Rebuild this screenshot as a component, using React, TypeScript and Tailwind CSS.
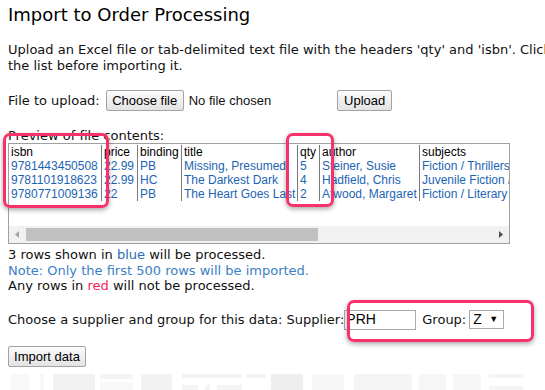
const ROWS = [
  ["9781443450508", "22.99", "PB", "Missing, Presumed", "5", "Steiner, Susie", "Fiction / Thrillers / Suspense"],
  ["9781101918623", "22.99", "HC", "The Darkest Dark", "4", "Hadfield, Chris", "Juvenile Fiction / Biography"],
  ["9780771009136", "22", "PB", "The Heart Goes Last", "2", "Atwood, Margaret", "Fiction / Literary"],
];

const HEADERS = ["isbn", "price", "binding", "title", "qty", "author", "subjects"];

const COLS = "grid grid-cols-[92px_36px_44px_116px_22px_100px_130px]";

function OldButton({ label, className }: { label: string; className?: string }) {
  return (
    <button
      className={`h-[21px] whitespace-nowrap rounded-[2px] border border-[#a3a3a3] bg-gradient-to-b from-[#fbfbfb] to-[#e3e3e3] px-0 font-['Liberation_Sans'] text-[13px] leading-none text-black ${className ?? ""}`}
    >
      {label}
    </button>
  );
}

function Marker({ className }: { className: string }) {
  return (
    <div
      className={`pointer-events-none absolute rounded-[7px] border-[3px] border-[#f5336a] shadow-[0_2px_5px_rgba(0,0,0,0.35)] ${className}`}
    />
  );
}

export default function App() {
  return (
    <div className="relative h-[390px] w-[545px] overflow-hidden bg-white font-['DejaVu_Sans',sans-serif] text-[#111]">
      <div className="w-[800px] px-[8px] pt-[3px]">
        <h1 className="text-[18px] leading-[24px] text-black">Import to Order Processing</h1>

        <p className="mt-[15px] whitespace-nowrap text-[13px] leading-[16px]">
          Upload an Excel file or tab-delimited text file with the headers 'qty' and 'isbn'. Click Preview to check
          <br />
          the list before importing it.
        </p>

        <div className="mt-[16px] flex h-[21px] items-center text-[13px]">
          <span>File to upload:</span>
          <OldButton label="Choose file" className="ml-[6px] w-[78px]" />
          <span className="ml-[5px] font-['Liberation_Sans'] text-[13px]">No file chosen</span>
          <OldButton label="Upload" className="ml-[66px] w-[55px]" />
        </div>

        <p className="mt-[17px] text-[13px] leading-[15px]">Preview of file contents:</p>

        <div className="relative h-[101px] w-[502px] overflow-hidden border border-[#a0a0a0] font-['Liberation_Sans'] text-[12px] leading-[14px]">
          <div className={`${COLS} pt-[1px]`}>
            {HEADERS.map((h, i) => (
              <div key={h} className={`h-[14px] overflow-hidden whitespace-nowrap pl-[2px] text-black ${i > 0 ? "border-l border-[#7a7a7a]" : ""}`}>
                {h}
              </div>
            ))}
            {ROWS.map((row) =>
              row.map((cell, i) => (
                <div
                  key={row[0] + i}
                  className={`h-[14px] overflow-hidden whitespace-nowrap pl-[2px] text-[#1c64b4] ${i > 0 ? "border-l border-[#7a7a7a]" : ""}`}
                >
                  {cell}
                </div>
              ))
            )}
          </div>

          {/* fake horizontal scrollbar */}
          <div className="absolute bottom-0 left-0 right-0 flex h-[17px] items-center bg-[#f1f1f1]">
            <svg width="17" height="17" viewBox="0 0 17 17" className="shrink-0">
              <path d="M10 5 L6 8.5 L10 12 Z" fill="#a3a3a3" />
            </svg>
            <div className="h-[13px] w-[292px] bg-[#c1c1c1]" />
            <div className="flex-1" />
            <svg width="17" height="17" viewBox="0 0 17 17" className="shrink-0">
              <path d="M7 5 L11 8.5 L7 12 Z" fill="#505050" />
            </svg>
          </div>
        </div>

        <div className="mt-[3px] text-[13px] leading-[15.5px]">
          <p>
            3 rows shown in <span className="text-[#2a6cb4]">blue</span> will be processed.
          </p>
          <p className="text-[#3a80c4]">Note: Only the first 500 rows will be imported.</p>
          <p>
            Any rows in <span className="text-[#f0245a]">red</span> will not be processed.
          </p>
        </div>

        <div className="mt-[16px] flex h-[20px] items-center text-[13px]">
          <span>Choose a supplier and group for this data: Supplier:</span>
          <input
            readOnly
            value="PRH"
            className="ml-[0px] h-[20px] w-[72px] border border-[#a9a9a9] px-[1px] font-['Liberation_Sans'] text-[14px] text-black outline-none"
          />
          <span className="ml-[6px]">Group:</span>
          <div className="ml-[3px] flex h-[19px] w-[35px] items-center justify-between border border-[#a9a9a9] pl-[3px] pr-[5px] font-['Liberation_Sans'] text-[14px] text-black">
            <span>Z</span>
            <span className="text-[9px]">▼</span>
          </div>
        </div>

        <OldButton label="Import data" className="mt-[16px] h-[20px] w-[78px]" />

        <div className="mt-[6px] flex h-[18px] items-start">
          <div className="ml-[2px] h-[18px] w-[20px] bg-[#f8f8f8]" />
          <div className="ml-[10px] h-[18px] w-[4px] bg-[#f8f8f8]" />
          <div className="ml-[9px] h-[18px] w-[42px] bg-[#f1f1f1]" />
          <div className="ml-[5px] flex h-[18px] w-[33px] flex-col gap-[3px]">
            <div className="h-[5px] bg-[#f4f4f4]" />
            <div className="h-[10px] bg-[#f8f8f8]" />
          </div>
          <div className="ml-[8px] h-[18px] w-[31px] bg-[#f2f2f2]" />
          <div className="ml-[10px] flex h-[18px] w-[60px] flex-col justify-between">
            <div className="h-[4px] bg-[#f4f4f4]" />
            <div className="flex gap-[7px]">
              <div className="h-[7px] w-[18px] bg-[#f4f4f4]" />
              <div className="h-[7px] w-[6px] bg-[#f4f4f4]" />
              <div className="h-[7px] w-[29px] bg-[#f4f4f4]" />
            </div>
          </div>
          <div className="ml-[5px] h-[4px] w-[19px] bg-[#f4f4f4]" />
          <div className="ml-[5px] h-[18px] w-[32px] bg-[#eeeeee]" />
          <div className="ml-[9px] h-[18px] w-[32px] bg-[#f7f7f7]" />
          <div className="ml-[10px] h-[18px] w-[58px] bg-[#f5f5f5]" />
          <div className="ml-[7px] h-[18px] w-[27px] bg-[#f6f6f6]" />
          <div className="ml-[7px] h-[18px] w-[28px] bg-[#f6f6f6]" />
          <div className="ml-[8px] flex h-[18px] w-[34px] flex-col justify-between">
            <div className="h-[4px] bg-[#f4f4f4]" />
            <div className="h-[6px] bg-[#f4f4f4]" />
          </div>
        </div>
      </div>

      <Marker className="left-[3px] top-[133px] h-[75px] w-[106px]" />
      <Marker className="left-[286px] top-[133px] h-[74px] w-[48px]" />
      <Marker className="left-[347px] top-[300px] h-[42px] w-[187px]" />
    </div>
  );
}
